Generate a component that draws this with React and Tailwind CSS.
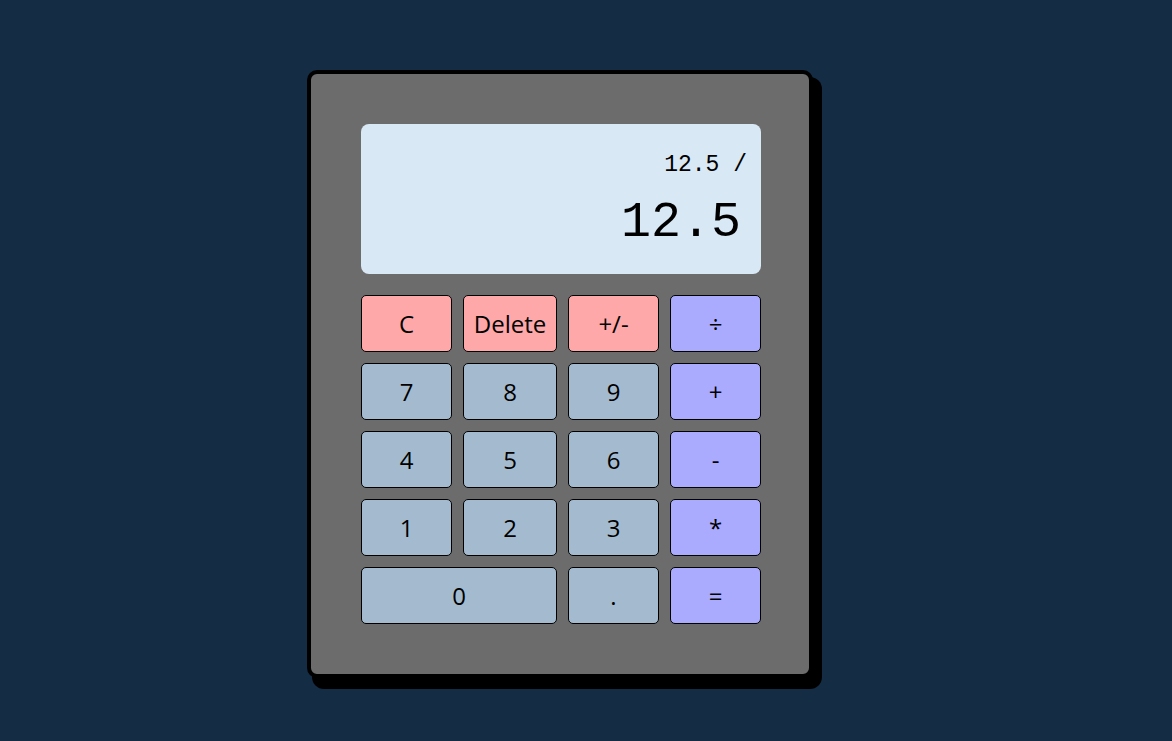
const keys = [
  { label: "C", kind: "clear" },
  { label: "Delete", kind: "clear" },
  { label: "+/-", kind: "clear" },
  { label: "÷", kind: "op" },
  { label: "7" },
  { label: "8" },
  { label: "9" },
  { label: "+", kind: "op" },
  { label: "4" },
  { label: "5" },
  { label: "6" },
  { label: "-", kind: "op" },
  { label: "1" },
  { label: "2" },
  { label: "3" },
  { label: "*", kind: "op" },
  { label: "0", wide: true },
  { label: "." },
  { label: "=", kind: "op" },
];

function Key({ label, kind, wide }) {
  const color =
    kind === "clear"
      ? "bg-[#ffa8a9]"
      : kind === "op"
      ? "bg-[#aaaaff]"
      : "bg-[#a4bbcf]";
  return (
    <button
      className={`${color} ${wide ? "col-span-2" : ""} h-[57px] border border-black rounded-[5px] text-[24px] text-black flex items-center justify-center`}
    >
      {label}
    </button>
  );
}

export default function App() {
  return (
    <div className="min-h-screen bg-[#152d44] flex justify-center items-start pt-[70px] pr-[52px] font-['Open_Sans','Noto_Sans',sans-serif]">
      <div className="bg-[#6c6c6c] border-4 border-black rounded-[10px] pt-[50px] pl-[50px] pr-[48px] pb-[50px] shadow-[7px_9px_0_2px_#000]">
        <div className="w-[400px] h-[150px] bg-[#d9e8f5] rounded-[8px] flex flex-col items-end pr-[14px] pt-[26px] font-['Liberation_Mono',monospace] text-black">
          <div className="text-[23px] leading-[30px]">12.5 /</div>
          <div className="text-[50px] leading-[60px] mt-[13px] pr-[6px]">12.5</div>
        </div>
        <div className="grid grid-cols-[91px_94px_91px_91px] gap-x-[11px] gap-y-[11px] mt-[21px]">
          {keys.map((k) => (
            <Key key={k.label} {...k} />
          ))}
        </div>
      </div>
    </div>
  );
}
